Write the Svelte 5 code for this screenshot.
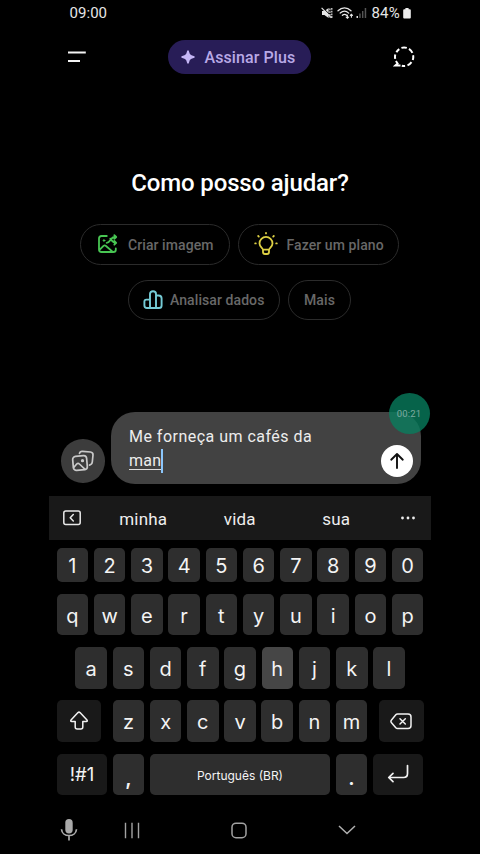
<script>
  const digits = [...'1234567890'];
  const top = [...'qwertyuiop'];
  const home = [...'asdfghjkl'];
  const bottom = [...'zxcvbnm'];
</script>

<main class="phone">
  <header class="status">
    <span class="clock">09:00</span>
    <div class="indicators">
      <svg class="mute" width="13" height="12" viewBox="0 0 13 12" fill="none" stroke="#e6e6e6">
        <path d="M1 4h2.400L7.600 1v10L3.400 8H1z" fill="#e6e6e6" stroke="none" />
        <path d="M1.400.2l9.400 9.400" stroke="#000" stroke-width="1" />
        <path d="M.6.9l9.800 9.900" stroke-width="1.200" />
        <path d="M8.900 1.500v9M10.800 1v10" stroke-width="1.200" stroke-dasharray="1.800 .9" />
      </svg>
      <svg class="wifi" width="17" height="12" viewBox="0 0 17 12" fill="none" stroke="#e6e6e6" stroke-width="1.300" stroke-linecap="round">
        <path d="M1 3.700c3.900-3.700 9.100-3.700 13 0M3.200 6.100c2.700-2.400 6-2.400 8.500 0M5.400 8.300c1.300-1.100 3-1.100 4.200 0" />
        <path d="M10.400 8v3.200M9.200 10.100l1.200 1.100 1.200-1.100M14.400 10.300V7.200M13.300 8.300l1.100-1.100 1.100 1.100" stroke-width="1.100" />
      </svg>
      <svg class="signal" width="11" height="12" viewBox="0 0 11 12" fill="#555">
        <path d="M.5 9H2v2H.5z" fill="#ddd" /><path d="M3.200 6.500h1.500V11H3.200zM6 4h1.400v7H6zM8.700 1h1.500v10H8.700z" />
      </svg>
      <span class="percent">84%</span>
      <svg class="battery" width="8" height="11" viewBox="0 0 8 11" fill="#eee"><path d="M2.400 0h3.200v1.200h1.200q1 0 1 1v7.300q0 1-1 1H1.200q-1 0-1-1V2.200q0-1 1-1h1.200z" /></svg>
    </div>
  </header>

  <nav class="topbar">
    <svg class="menu" width="20" height="14" viewBox="0 0 20 14" stroke="#f4f4f4" stroke-width="1.900"><path d="M1 2.500h17.800M1 11h12" /></svg>
    <button class="plus">
      <svg width="14" height="14" viewBox="0 0 14 14" fill="#c5b6f6"><path d="M7 .3Q8 .3 8.200 2 8.700 5.300 12 5.800q1.800.2 1.800 1.200T12 8.200q-3.300.5-3.800 3.800Q8 13.700 7 13.700T5.800 12Q5.300 8.700 2 8.200.2 8 .2 7T2 5.800Q5.300 5.300 5.800 2 6 .3 7 .3z" /></svg>
      <span>Assinar Plus</span>
    </button>
    <svg class="temp" width="22" height="22" viewBox="0 0 22 22" fill="none" stroke="#fff" stroke-width="2">
      <path d="M8.400 1.900a9.200 9.200 0 0 1 5.400 0M16 2.900a9.200 9.200 0 0 1 3.400 4M20.100 9.300a9.200 9.200 0 0 1-.3 4.700M18.500 16.200a9.200 9.200 0 0 1-4 3.200M12.100 20a9.200 9.200 0 0 1-3.300-.3M2.200 12.900a9.200 9.200 0 0 1 .1-4.300M3.400 6.300a9.200 9.200 0 0 1 2.900-3.200M2.900 15l1.700 2.500-2.300 2h5.200" />
    </svg>
  </nav>

  <section class="welcome">
    <h1>Como posso ajudar?</h1>
    <div class="chips">
      <button class="chip image">
        <svg width="22" height="22" viewBox="0 0 22 22" fill="none" stroke="#48c653" stroke-width="1.800" stroke-linecap="round" stroke-linejoin="round">
          <path d="M9.800 3H4.500Q2 3 2 5.500v11q0 2.500 2.500 2.500h11.800q2.500 0 2.500-2.300v-1.200M2.500 16.800l4-3.900q1.200-1 2.500.1l6.500 5.600M19 4h-1.500c-4 0-4 5.800-7.800 5.800M13.300 5.600c1.600 1.800 1.800 4.200 5.500 4.200M17.300 2.100L19.200 4l-1.900 1.900M17.300 7.900l1.900 1.900-1.900 1.900" />
          <circle cx="7" cy="7.500" r=".8" fill="#48c653" stroke-width="1" />
        </svg>
        <span>Criar imagem</span>
      </button>
      <button class="chip plan">
        <svg width="26" height="26" viewBox="0 0 26 26" fill="none" stroke="#ddd044" stroke-width="1.800" stroke-linecap="round" stroke-linejoin="round">
          <path d="M10 18.700c0-1.500-3.500-3-3.500-6.300a6.500 6.500 0 0 1 13 0c0 3.300-3.500 4.800-3.500 6.300zM10 18.700v2.300q0 2 2 2h2q2 0 2-2v-2.300M13 1.800v.6M5.200 5l.6.6M20.800 5l-.6.6M2.200 12.400h.6M23.200 12.400h.6" />
        </svg>
        <span>Fazer um plano</span>
      </button>
    </div>
    <div class="chips second">
      <button class="chip data">
        <svg width="20" height="20" viewBox="0 0 20 20" fill="none" stroke="#75cbd5" stroke-width="1.900" stroke-linejoin="round">
          <path d="M7 18H4q-2.600 0-2.600-2.600v-3.800q0-2 2-2H7M7 18V4q0-2.700 3-2.700T13 4v14zM13 5.500h2.500q3.100 0 3.100 3.100v6.800q0 2.600-2.600 2.600h-3" />
        </svg>
        <span>Analisar dados</span>
      </button>
      <button class="chip more"><span>Mais</span></button>
    </div>
  </section>

  <section class="composer">
    <button class="gallery" aria-label="Galeria">
      <svg width="24" height="24" viewBox="0 0 24 24" fill="none" stroke="#c9c9c9" stroke-width="1.700" stroke-linecap="round" stroke-linejoin="round">
        <path d="M8.500 4.400Q9 2.100 11.500 2.300l8 .7q2.700.3 2.500 3l-.7 7q-.3 2.600-2.800 3.100" />
        <rect x="2" y="7" width="14" height="14" rx="3" transform="rotate(-5 9 14)" />
        <path d="M2.700 18.500l3-3.500q1.300-1.400 2.700 0l5.700 5.300" /><circle cx="11.500" cy="11.700" r=".8" fill="#c9c9c9" />
      </svg>
    </button>
    <div class="bubble">
      <p><span class="line">Me forneça um cafés da</span><span class="line"><u>man</u><i class="caret"></i></span></p>
      <button class="send" aria-label="Enviar">
        <svg width="18" height="18" viewBox="0 0 18 18" fill="none" stroke="#111" stroke-width="1.900" stroke-linecap="round" stroke-linejoin="round"><path d="M9 16V2M3.200 7.700L9 2l5.800 5.700" /></svg>
      </button>
      <span class="timer">00:21</span>
    </div>
  </section>

  <section class="suggestions">
    <svg width="18" height="16" viewBox="0 0 18 16" fill="none" stroke="#e8e8e8" stroke-width="1.500" stroke-linecap="round" stroke-linejoin="round"><rect x=".8" y=".9" width="16.400" height="13.700" rx="2" /><path d="M10.300 4.500L7.200 7.700l3.100 3.200" /></svg>
    <span>minha</span><span>vida</span><span>sua</span>
    <svg class="dots" width="16" height="4" viewBox="0 0 16 4" fill="#eee"><circle cx="2.500" cy="2" r="1.400" /><circle cx="8" cy="2" r="1.400" /><circle cx="13.500" cy="2" r="1.400" /></svg>
  </section>

  <section class="keyboard">
    <div class="row digits">
      {#each digits as k}<span class="key">{k}</span>{/each}
    </div>
    <div class="row">
      {#each top as k}<span class="key">{k}</span>{/each}
    </div>
    <div class="row">
      {#each home as k}<span class="key" class:pressed={k === 'h'}>{k}</span>{/each}
    </div>
    <div class="row">
      <span class="key dark shift">
        <svg width="20" height="20" viewBox="0 0 20 20" fill="none" stroke="#f2f2f2" stroke-width="1.500" stroke-linejoin="round"><path d="M9 1.600q1-.9 2 0l7 7.500q.8 1.300-.7 1.300h-3.500V16q0 2-2 2H8.200q-2 0-2-2v-5.600H2.700q-1.500 0-.7-1.300z" /></svg>
      </span>
      {#each bottom as k}<span class="key">{k}</span>{/each}
      <span class="key dark erase">
        <svg width="22" height="17" viewBox="0 0 22 17" fill="none" stroke="#f2f2f2" stroke-width="1.500" stroke-linecap="round" stroke-linejoin="round"><path d="M7.500 1H18q3 0 3 3v8.500q0 3-3 3H7.500q-1 0-1.700-.8l-4.300-5q-1.200-1.400 0-2.800l4.300-5.100Q6.500 1 7.500 1zM10 5.700l5.300 5.300M15.300 5.700L10 11" /></svg>
      </span>
    </div>
    <div class="row">
      <span class="key dark symbols">!#1</span>
      <span class="key punct">,</span>
      <span class="key space">Português (BR)</span>
      <span class="key punct">.</span>
      <span class="key dark enter">
        <svg width="22" height="20" viewBox="0 0 22 20" fill="none" stroke="#f2f2f2" stroke-width="1.700" stroke-linecap="round" stroke-linejoin="round"><path d="M20.500 1.500v8q0 4-4 4H2M6 9.300l-4.300 4.200L6 17.700" /></svg>
      </span>
    </div>
  </section>

  <footer class="navbar">
    <svg width="18" height="24" viewBox="0 0 18 24" fill="none" stroke="#aaa" stroke-width="1.700"><rect x="5.300" y="1" width="7.400" height="14.500" rx="3.700" fill="#aaa" stroke="none" /><path d="M1.500 11.200c.3 4 3.500 6.300 7.500 6.300s7.200-2.300 7.500-6.300M9 17.500V22.500" /></svg>
    <svg width="16" height="17" viewBox="0 0 16 17" stroke="#a2a2a2" stroke-width="1.400"><path d="M1.500.7v15.600M8 .7v15.600M14.500.7v15.600" /></svg>
    <svg width="16" height="17" viewBox="0 0 16 17" fill="none" stroke="#a2a2a2" stroke-width="1.500"><rect x="1" y="1.200" width="14" height="14.500" rx="4" /></svg>
    <svg width="18" height="10" viewBox="0 0 18 10" fill="none" stroke="#b0b0b0" stroke-width="1.500"><path d="M1 1l8 7.500L17 1" /></svg>
  </footer>
</main>

<style>
  :global(body) { background: #000; }
  .phone {
    width: 382px;
    height: 854px;
    margin-left: 49px;
    display: flex;
    flex-direction: column;
    color: #f2f2f2;
    font-family: Roboto, sans-serif;
    overflow: hidden;
  }
  button { border: 0; padding: 0; font: inherit; color: inherit; background: none; display: flex; align-items: center; }
  svg { display: block; flex: none; }
  .status { height: 26px; padding: 0 20px 0 20.500px; display: flex; justify-content: space-between; align-items: center; box-sizing: border-box; }
  .clock { font-size: 15px; letter-spacing: .05px; color: #e6e6e6; }
  .indicators { display: flex; align-items: center; }
  .wifi { margin-left: 3px; }
  .signal { margin-left: 2px; }
  .percent { font-size: 15px; letter-spacing: .25px; margin: 0 3px 0 4px; color: #e6e6e6; }
  .topbar { height: 34px; margin-top: 13.500px; padding: 0 16px 0 18px; display: flex; align-items: center; justify-content: space-between; }
  .plus { box-sizing: border-box; width: 143px; height: 34px; margin-left: -1px; border-radius: 17px; padding-left: 13px; gap: 9.500px; background: #281d57; color: #b8a9e6; font-size: 16px; font-weight: 500; letter-spacing: .08px; white-space: nowrap; }
  .plus span { padding-top: 1px; }
  .welcome { height: 338.500px; display: flex; flex-direction: column; align-items: center; }
  h1 { margin: 93px 0 0; font-size: 24px; line-height: 32px; font-weight: 500; letter-spacing: -.15px; white-space: nowrap; color: #fff; }
  .chips { display: flex; gap: 8px; margin: 25.500px 1px 0 0; }
  .chips.second { margin-top: 15px; }
  .chip { box-sizing: border-box; height: 40.500px; border: 1px solid #2b2b2b; border-radius: 21px; font-size: 14px; font-weight: 500; letter-spacing: .08px; color: #686868; white-space: nowrap; }
  .chip span { padding-top: 1px; }
  .image { width: 150px; padding-left: 16px; gap: 9px; }
  .plan { width: 161px; padding-left: 14px; gap: 7.500px; }
  .data { width: 152px; padding-left: 14px; gap: 7px; }
  .more { width: 63px; justify-content: center; }
  .composer { height: 84px; display: flex; align-items: flex-start; padding-left: 12px; gap: 6.500px; }
  .gallery { width: 43.500px; height: 43.500px; margin-top: 27px; border-radius: 50%; background: #3c3c3c; justify-content: center; }
  .bubble { position: relative; width: 310px; height: 72px; border-radius: 24px; background: #424242; display: flex; justify-content: space-between; box-sizing: border-box; padding: 12.500px 8px 0 18px; }
  p { margin: 0; font-size: 16px; letter-spacing: .48px; line-height: 24px; color: #ededed; }
  .line { display: flex; height: 24px; white-space: nowrap; }
  u { text-decoration: none; height: 20px; border-bottom: 1px solid #ddd; line-height: 24px; letter-spacing: .3px; }
  .caret { width: 1.500px; height: 24px; background: #8bc6fb; }
  .send { width: 32px; height: 32px; margin-top: 20px; border-radius: 50%; background: #fff; justify-content: center; }
  .timer { position: absolute; left: 277.500px; top: -19px; width: 41px; height: 41px; border-radius: 50%; background: rgba(8, 126, 94, .79); display: flex; align-items: center; justify-content: center; font-size: 9.500px; letter-spacing: .2px; color: #7eaaa0; }
  .suggestions { height: 44px; background: #191919; display: grid; grid-template-columns: 46px 96.500px 96.500px 96.500px 46.500px; align-items: center; justify-items: center; font-size: 17px; letter-spacing: .2px; color: #eee; }
  .suggestions span { padding-top: 1px; }
  .keyboard { padding: 8.300px 7.500px 0; display: flex; flex-direction: column; gap: 11.700px; }
  .row { display: flex; justify-content: center; gap: 5.750px; height: 41.500px; }
  .row.digits { height: 34px; }
  .key { box-sizing: border-box; width: 31.500px; padding-top: 2px; border-radius: 5px; background: #2e2e2e; display: flex; align-items: center; justify-content: center; font-family: Inter, sans-serif; font-size: 20px; color: #f4f4f4; white-space: nowrap; }
  .pressed { background: #464646; }
  .dark { background: #191919; padding-top: 0; }
  .shift, .erase { width: 45px; }
  .shift { margin-right: 5.500px; }
  .erase { margin-left: 5.500px; }
  .symbols, .enter { width: 50px; }
  .symbols { font-size: 18.500px; }
  .space { width: 180px; font-size: 12px; }
  .punct { padding-top: 8px; font-weight: 600; }
  .navbar { height: 36px; margin-top: 17px; display: grid; grid-template-columns: 40px 86px 127px 90px; align-items: center; justify-items: center; }
</style>
